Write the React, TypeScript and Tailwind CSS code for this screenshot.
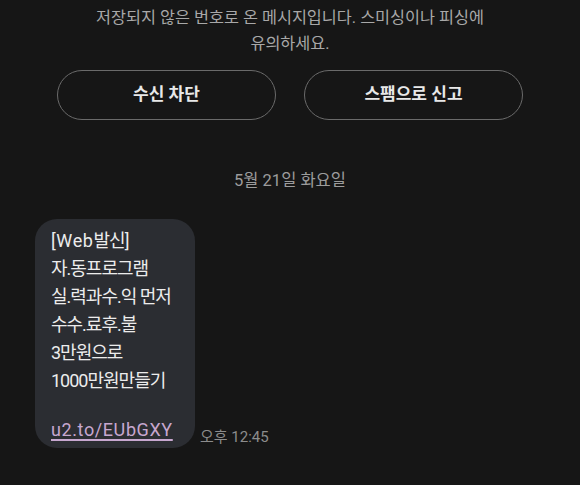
import React from "react";

const font = { fontFamily: 'Roboto, "Noto Sans CJK KR", sans-serif' };

export default function App() {
  return (
    <div
      className="w-[580px] h-[485px] bg-[#161616] overflow-hidden flex flex-col"
      style={font}
    >
      <p className="pt-[5px] text-center text-[16.3px] leading-[26px] text-[#a8a8a8] whitespace-nowrap">
        저장되지 않은 번호로 온 메시지입니다. 스미싱이나 피싱에
        <br />
        유의하세요.
      </p>
      <div className="mt-[13px] flex gap-[28px] px-[57px]">
        <button className="flex-1 h-[50px] rounded-full border-[1.5px] border-[#6a6a6a] text-[17px] font-bold text-[#e8e8e8]">
          수신 차단
        </button>
        <button className="flex-1 h-[50px] rounded-full border-[1.5px] border-[#6a6a6a] text-[17px] font-bold text-[#e8e8e8]">
          스팸으로 신고
        </button>
      </div>
      <div className="mt-[50px] text-center text-[16.5px] leading-[22px] text-[#9c9c9c]">
        5월 21일 화요일
      </div>
      <div className="mt-[27px] flex items-end pl-[35px]">
        <div className="w-[160px] rounded-[22px] bg-[#2b2d32] pl-[16px] pr-[10px] pt-[8px] pb-[4px] text-[18px] leading-[28px] text-[#ececec] whitespace-nowrap tracking-[-1px]">
          <div>
            <span className="tracking-[0.6px]">[Web</span>발신]
          </div>
          <div>자.동프로그램</div>
          <div>실.력과수.익 먼저</div>
          <div>수수.료후.불</div>
          <div>3만원으로</div>
          <div>1000만원만들기</div>
          <div className="mt-[21px]">
            <span className="text-[#c7a7cf] underline underline-offset-[3px] decoration-[1.5px] tracking-[0.6px]">
              u2.to/EUbGXY
            </span>
          </div>
        </div>
        <div className="ml-[5px] mb-[1px] text-[15px] leading-[20px] text-[#8c8c8c]">
          오후 12:45
        </div>
      </div>
    </div>
  );
}
